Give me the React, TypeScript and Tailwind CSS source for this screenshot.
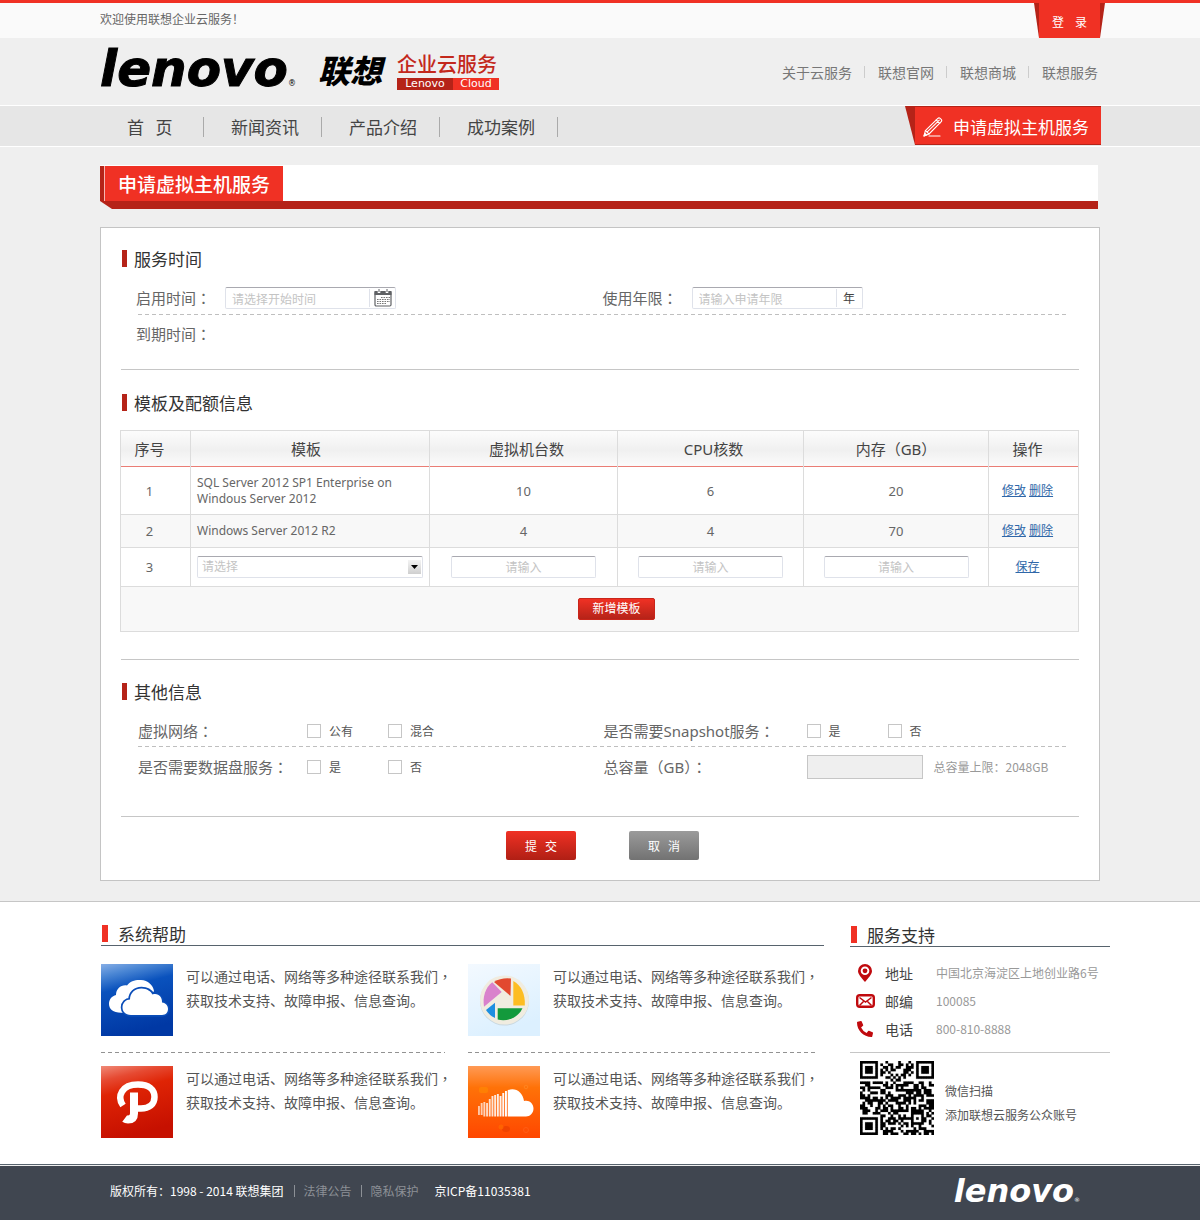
import type { ReactNode } from "react";
import { FaPhoneAlt } from "react-icons/fa";

const QR_SIZE = 29;

function inFinder(x: number, y: number, ox: number, oy: number, size: number): boolean | null {
  const dx = x - ox;
  const dy = y - oy;
  if (dx < -1 || dy < -1 || dx > size || dy > size) return null;
  if (dx < 0 || dy < 0 || dx >= size || dy >= size) return size === 7 ? false : null;
  const ring = Math.min(dx, dy, size - 1 - dx, size - 1 - dy);
  return ring !== 1;
}

function buildQr(): string {
  let seed = 20141;
  let d = "";
  for (let y = 0; y < QR_SIZE; y++) {
    for (let x = 0; x < QR_SIZE; x++) {
      seed = (seed * 1103515245 + 12345) % 2147483648;
      let on = (seed >> 12) % 100 < 52;
      const fixed =
        inFinder(x, y, 0, 0, 7) ??
        inFinder(x, y, QR_SIZE - 7, 0, 7) ??
        inFinder(x, y, 0, QR_SIZE - 7, 7) ??
        inFinder(x, y, 20, 20, 5);
      if (fixed !== null) on = fixed;
      if (on) d += `M${x} ${y}h1v1h-1z`;
    }
  }
  return d;
}

const QR_PATH = buildQr();

function QrCode() {
  return (
    <svg viewBox="0 0 29 29" className="size-[74px] shrink-0" role="img" aria-label="微信二维码">
      <path d={QR_PATH} fill="#000" stroke="#000" strokeWidth="0.06" />
    </svg>
  );
}

function Dashes({ dark = false }: { dark?: boolean }) {
  return (
    <div
      className={
        dark
          ? "h-px bg-[repeating-linear-gradient(90deg,#929292_0_4px,transparent_4px_7px)]"
          : "h-px bg-[repeating-linear-gradient(90deg,#bfbfbf_0_4px,transparent_4px_7px)]"
      }
    />
  );
}

/* Full-width punctuation centred in its em box. */
function Mark({ children }: { children: ReactNode }) {
  return <span className="font-['Noto_Sans_CJK_TC',sans-serif]">{children}</span>;
}

function SectionTitle({ children }: { children: ReactNode }) {
  return (
    <h2 className="ml-[21px] flex h-[17px] items-center gap-[7px] text-[17px] leading-[17px] text-[#333]">
      <span className="h-full w-[5px] bg-[#b52318]" />
      {children}
    </h2>
  );
}

function CalendarIcon() {
  return (
    <svg viewBox="0 0 18 18" className="size-[18px]" fill="none">
      <rect x="1" y="2.5" width="16" height="14.5" rx="1.2" stroke="#5f6164" strokeWidth="1.2" />
      <path d="M.5 2h17v4H.5z" fill="#5f6164" />
      <path d="M5 0v4M13 0v4" stroke="#fff" strokeWidth="2.6" />
      <path d="M5 0v3M13 0v3" stroke="#5f6164" strokeWidth="1" />
      <path d="M7 8.5h9M3 10.5h13M3 12.5h13M3 14.5h9" stroke="#777" strokeWidth="1.2" strokeDasharray="1.6 .9" />
    </svg>
  );
}

function PencilIcon() {
  return (
    <svg viewBox="0 0 20 20" className="size-5" fill="none" stroke="#fff" strokeWidth="1.1" strokeLinejoin="round" strokeLinecap="round">
      <path d="M1 19l1.4-5.4L14.6 1.6c.8-.8 1.8-.9 2.6-.2l1 .9c.7.8.6 1.8-.2 2.6L6 17z" />
      <path d="M2.4 13.6L6 17M4 15.2L16.3 3.2M13.2 3l3.6 3.4" />
      <path d="M1 19l1-2.6 1.7 1.7z" fill="#fff" />
      <path d="M6 19h11" />
    </svg>
  );
}

function CloudDriveIcon() {
  return (
    <svg viewBox="0 0 72 72" className="size-[72px] shrink-0">
      <defs>
        <linearGradient id="driveBg" x1="0" y1="0" x2="0.25" y2="1">
          <stop offset="0" stopColor="#86aee6" />
          <stop offset="0.17" stopColor="#4a86d4" />
          <stop offset="0.38" stopColor="#0a52bd" />
          <stop offset="1" stopColor="#0038a4" />
        </linearGradient>
      </defs>
      <path d="M0 0h72v72H0z" fill="url(#driveBg)" />
      <path d="M20 48.7C12 48.7 8 45 8 40s3-8 7-9c0-6 5-10.5 11-9.5 3-4.5 9-6 14-5.5 7 .5 12 5 13 11L44 40 30 48.7z" fill="#fff" />
      <path
        d="M30 51c-6 0-8.5-4-8.5-7.5 0-4.5 3.5-8 7.500-8 0-6.500 5-11 11.500-11 5.500 0 9.500 3 11 6C57 28.500 61.500 33 61 38.500c4 .5 6 3.500 6 6.500 0 3-2 6-6 6z"
        fill="#fff"
        stroke="#0a4db8"
        strokeWidth="3.5"
        paintOrder="stroke"
      />
    </svg>
  );
}

function PhotoIcon() {
  return (
    <svg viewBox="0 0 72 72" className="size-[72px] shrink-0">
      <defs>
        <linearGradient id="photoBg" x1="0" y1="0" x2="0.4" y2="1">
          <stop offset="0" stopColor="#f3f9ff" />
          <stop offset="1" stopColor="#dcf0ff" />
        </linearGradient>
      </defs>
      <path d="M0 0h72v72H0z" fill="url(#photoBg)" />
      <circle cx="36.5" cy="37" r="24.5" fill="#c9d8e0" />
      <circle cx="36.5" cy="36" r="24.5" fill="#f0ece0" />
      <path d="M26 18q7-4.500 17-3.500L42.500 32z" fill="#e2492f" />
      <path d="M45.3 17C53 21 57.5 30 56.8 41.5H45.3z" fill="#fdbd22" />
      <path d="M29.7 44.3h24.8C50 54 39 58 29.7 55.5z" fill="#139a3c" />
      <path d="M18 46l9-7.3V54q-6-3-9-8z" fill="#1d8fe0" />
      <path d="M16 42.7C14.5 33 17 24 24.3 18.3L33.7 28z" fill="#d982cc" />
    </svg>
  );
}

function PinRingIcon() {
  return (
    <svg viewBox="0 0 72 72" className="size-[72px] shrink-0">
      <defs>
        <linearGradient id="ringBg" x1="0" y1="0" x2="0.25" y2="1">
          <stop offset="0" stopColor="#f08a78" />
          <stop offset="0.2" stopColor="#e64a32" />
          <stop offset="0.4" stopColor="#df2405" />
          <stop offset="1" stopColor="#c61000" />
        </linearGradient>
      </defs>
      <path d="M0 0h72v72H0z" fill="url(#ringBg)" />
      <g fill="none" stroke="#fff">
        <path d="M22 39.5C15.500 30 21 18.500 37 18.500c11 0 16.500 5 16.500 12.500S48 42.500 40 42.500h-4" strokeWidth="6.500" />
        <path d="M33 26.500V47.500q0 6-6 6-2 0-3.300-1" strokeWidth="8" />
      </g>
    </svg>
  );
}

const BARS: [number, number][] = [
  [10, 40], [12.7, 37], [15.4, 36], [18.1, 37], [20.8, 33], [23.5, 30], [26.2, 29], [28.9, 28], [31.6, 30], [34.3, 27], [37, 25],
];

function SoundIcon() {
  return (
    <svg viewBox="0 0 72 72" className="size-[72px] shrink-0">
      <defs>
        <linearGradient id="soundBg" x1="0" y1="0" x2="0" y2="1">
          <stop offset="0" stopColor="#ff9a55" />
          <stop offset="0.3" stopColor="#ff7208" />
          <stop offset="1" stopColor="#ff4700" />
        </linearGradient>
      </defs>
      <path d="M0 0h72v72H0z" fill="url(#soundBg)" />
      <rect x="11" y="21" width="9" height="6" rx="2" fill="#ff8f00" opacity=".5" />
      <circle cx="58" cy="21" r="1.8" fill="none" stroke="#ff8420" />
      <ellipse cx="38" cy="63" rx="4" ry="3" fill="#f04300" />
      <circle cx="33" cy="61" r="2.5" fill="#ff6a00" opacity=".7" />
      <circle cx="58" cy="64" r="2.5" fill="none" stroke="#ff5c14" />
      {BARS.map(([x, y], i) => (
        <rect key={x} x={x} y={y} width="1.9" height={(i < 2 ? 49 : 50.5) - y} fill="#fff" opacity={0.65 + i * 0.035} />
      ))}
      <path d="M39.7 24.3C47 21 55 26 56 35c5-1.5 9.500 2.500 9.500 7.500 0 4.500-3.500 8-7.500 8H39.700z" fill="#fff" />
    </svg>
  );
}

function MarkerIcon() {
  return (
    <svg viewBox="0 0 14 18" className="h-[18px] w-[14px]">
      <path d="M7 0a7 7 0 0 1 7 7c0 3.500-3.500 6.500-7 11C3.500 13.500 0 10.500 0 7a7 7 0 0 1 7-7z" fill="#c00a0e" />
      <circle cx="7" cy="6.8" r="4.3" fill="#fff" />
      <circle cx="7" cy="6.8" r="2.4" fill="#c00a0e" />
    </svg>
  );
}

function MailIcon() {
  return (
    <svg viewBox="0 0 19 14" className="h-[14px] w-[19px]">
      <rect x="1.200" y="1.200" width="16.600" height="11.600" rx="2.500" fill="#fff" stroke="#c00a0e" strokeWidth="2.400" />
      <path d="M3.500 3.500l6 4.500 6-4.500M3.500 11.500l4-4M15.500 11.500l-4-4" fill="none" stroke="#c00a0e" strokeWidth="1.500" />
    </svg>
  );
}

const TOP_LINKS = ["关于云服务", "联想官网", "联想商城", "联想服务"];
const NAV = ["首\u00a0\u00a0\u00a0页", "新闻资讯", "产品介绍", "成功案例"];

function TopHeader() {
  return (
    <header>
      <div className="border-t-[3px] border-[#f03124] bg-[#fafafa]">
        <div className="mx-auto flex h-[35px] max-w-[1000px] justify-between">
          <p className="mt-[9px] text-[12px] leading-[14px] text-[#666]">欢迎使用联想企业云服务！</p>
          <div className="mr-[-5px] w-[71px] bg-[#b52318] px-[5px] [clip-path:polygon(0_0,100%_0,calc(100%-5px)_100%,5px_100%)]">
            <button type="button" className="h-full w-full cursor-pointer whitespace-pre bg-[#f03124] pt-[2px] text-[12px] text-white">
              登{"    "}录
            </button>
          </div>
        </div>
      </div>

      <div className="mx-auto flex h-[67px] max-w-[1000px] items-center justify-between">
        <a href="#" className="flex items-center">
          <span className="mb-1.5 w-[214px] whitespace-nowrap font-['DejaVu_Sans'] text-[50px] font-bold italic leading-[50px] text-black [-webkit-text-stroke:1px_#000]">
            lenovo<span className="text-[8px] font-normal not-italic leading-[8px] [-webkit-text-stroke:0]">®</span>
          </span>
          <span className="mb-1.5 ml-1 text-[32px] font-black italic leading-[34px] text-black">联想</span>
          <span className="ml-[15px] flex w-[102px] flex-col">
            <span className="pb-1 text-[20px] font-medium leading-[20px] text-[#c3281c]">企业云服务</span>
            <span className="flex h-3 text-center font-['DejaVu_Sans'] text-[11px] leading-3 text-white">
              <span className="w-[56px] bg-[#b52318]">Lenovo</span>
              <span className="flex-1 bg-[#f03124]">Cloud</span>
            </span>
          </span>
        </a>
        <nav className="mr-[2px] flex items-center text-[14px] leading-5 text-[#777]">
          {TOP_LINKS.map((t, i) => (
            <span key={t} className="flex items-center">
              {i > 0 && <span className="ml-3 mr-[13px] h-3 w-px bg-[#ccc]" />}
              <a href="#">{t}</a>
            </span>
          ))}
        </nav>
      </div>

      <div className="border-y border-white bg-[#e6e6e6]">
        <div className="mx-auto flex h-10 max-w-[1000px] justify-between">
          <nav className="flex items-center pt-0.5 text-[17px] leading-6 text-[#444]">
            {NAV.map((t, i) => (
              <a
                key={t}
                href="#"
                className={
                  i === 0
                    ? "flex h-5 w-[104px] items-center border-r border-[#aaa] pl-[27px]"
                    : "flex h-5 w-[118px] items-center border-r border-[#aaa] pl-[27px]"
                }
              >
                {t}
              </a>
            ))}
          </nav>
          <div className="mr-[-1px] h-[39px] bg-[#b52318] py-px pl-[10px] [clip-path:polygon(0_0,100%_0,100%_100%,10px_100%)]">
            <a href="#" className="flex h-full w-[186px] items-center gap-[10px] bg-[#f03124] pl-2 pt-0.5 text-[17px] leading-6 text-white">
              <PencilIcon />
              申请虚拟主机服务
            </a>
          </div>
        </div>
      </div>
    </header>
  );
}

function PageTitle() {
  return (
    <div className="mr-[2px] mt-[18px]">
      <div className="flex h-9 bg-white">
        <div className="mt-px w-1 bg-[#b52318]" />
        <h1 className="mt-px flex w-[179px] items-center border-l border-[#f7b5b0] bg-[#f03124] pl-[13px] text-[19px] font-medium leading-6 text-white">
          申请虚拟主机服务
        </h1>
      </div>
      <div className="h-2 bg-[#b52318] [clip-path:polygon(0_0,100%_0,100%_100%,12px_100%)]" />
    </div>
  );
}

const FIELD = "flex h-[22px] w-[171px] items-center rounded-[2px] border border-[#dfe2ea] border-t-[#a9a9b0] bg-white";

function TimeSection() {
  return (
    <section className="pt-[22px]">
      <SectionTitle>服务时间</SectionTitle>
      <div className="ml-[35px] mr-[30px] mt-5 text-[15px] text-[#666]">
        <div className="grid grid-cols-2">
          <div className="flex h-[22px] items-center">
            <label htmlFor="start" className="w-[89px]">启用时间<Mark>：</Mark></label>
            <div className={FIELD}>
              <input id="start" placeholder="请选择开始时间" className="h-5 w-[143px] pl-1.5 text-[12px] outline-none placeholder:text-[#c4c4c4]" />
              <button type="button" aria-label="选择日期" className="flex h-[18px] flex-1 cursor-pointer items-center justify-center border-l border-[#dfe2ea]">
                <CalendarIcon />
              </button>
            </div>
          </div>
          <div className="flex h-[22px] items-center">
            <label htmlFor="years" className="w-[89px]">使用年限<Mark>：</Mark></label>
            <div className={FIELD}>
              <input id="years" placeholder="请输入申请年限" className="h-5 w-[143px] pl-1.5 text-[12px] outline-none placeholder:text-[#c4c4c4]" />
              <span className="flex h-[18px] flex-1 items-center justify-center border-l border-[#dfe2ea] text-[12px] text-[#444]">年</span>
            </div>
          </div>
        </div>
        <div className="ml-[2px] mt-[5px]">
          <Dashes />
        </div>
        <p className="flex h-[38px] items-center">到期时间<Mark>：</Mark></p>
      </div>
    </section>
  );
}

const CELL = "border border-[#dcdcdc]";
const HEADS = ["序号", "模板", "虚拟机台数", "CPU核数", "内存（GB）", "操作"];
const ROWS = [
  { id: 1, name: "SQL Server 2012 SP1 Enterprise on Windous Server 2012", vm: 10, cpu: 6, mem: 20 },
  { id: 2, name: "Windows Server 2012 R2", vm: 4, cpu: 4, mem: 70 },
];

function HeadCell({ text, index }: { text: string; index: number }) {
  const pad = index === 0 || index === 5 ? "pr-[12px]" : index === 1 ? "pr-2" : index < 4 ? "pl-1.5" : "";
  return <th className={`border-x border-t border-[#dcdcdc] font-normal ${pad}`}>{text}</th>;
}

function QuotaTable() {
  return (
    <table className="mx-[19px] mt-[19px] w-[calc(100%-39px)] table-fixed border-collapse text-center font-['Noto_Sans','Noto_Sans_CJK_SC',sans-serif] text-[13px] leading-4 text-[#666]">
      <colgroup>
        <col className="w-[70px]" />
        <col className="w-[239px]" />
        <col className="w-[188px]" />
        <col className="w-[186px]" />
        <col className="w-[185px]" />
        <col />
      </colgroup>
      <thead>
        <tr className="h-9 border-b border-[#ea7d75] bg-[linear-gradient(#fcfcfc,#f0f0f0_55%,#fbfbfb)] text-[15px] text-[#444]">
          {HEADS.map((h, i) => (
            <HeadCell key={h} text={h} index={i} />
          ))}
        </tr>
      </thead>
      <tbody>
        {ROWS.map((r) => (
          <tr key={r.id} className={r.id === 1 ? "h-12" : "h-[33px] bg-[#f8f8f8]"}>
            <td className="border-x border-b border-[#dcdcdc] pr-3">{r.id}</td>
            <td className="border-x border-b border-[#dcdcdc] pl-1.5 pr-4 text-left text-[12px]">{r.name}</td>
            <td className="border-x border-b border-[#dcdcdc]">{r.vm}</td>
            <td className="border-x border-b border-[#dcdcdc]">{r.cpu}</td>
            <td className="border-x border-b border-[#dcdcdc]">{r.mem}</td>
            <td className="border-x border-b border-[#dcdcdc] pr-3 text-[12px] text-[#2f67a8]">
              <a href="#" className="underline">修改</a> <a href="#" className="underline">删除</a>
            </td>
          </tr>
        ))}
        <tr className="h-[39px]">
          <td className={`${CELL} pr-3`}>3</td>
          <td className={`${CELL} px-1.5`}>
            <div className="relative">
              <select
                aria-label="模板"
                className="block h-[22px] w-full appearance-none rounded-[2px] border border-[#dfe2ea] border-t-[#a9a9b0] bg-white pl-1 text-[12px] text-[#c4c4c4] outline-none"
              >
                <option>请选择</option>
              </select>
              <span className="pointer-events-none absolute right-[2px] top-1 flex h-[14px] w-[13px] items-center justify-center bg-[linear-gradient(#f4f4f4,#cfcfcf)]">
                <svg viewBox="0 0 7 4" className="h-1 w-[7px]">
                  <path d="M0 0h7L3.500 4z" fill="#000" />
                </svg>
              </span>
            </div>
          </td>
          {["虚拟机台数", "CPU核数", "内存"].map((n) => (
            <td key={n} className={CELL}>
              <input
                aria-label={n}
                placeholder="请输入"
                className="mx-auto block h-[22px] w-[145px] rounded-[2px] border border-[#dfe2ea] border-t-[#a9a9b0] bg-white text-center text-[12px] outline-none placeholder:text-[#c4c4c4]"
              />
            </td>
          ))}
          <td className={`${CELL} pr-3 text-[12px] text-[#2f67a8]`}>
            <a href="#" className="underline">保存</a>
          </td>
        </tr>
        <tr className="h-[45px] bg-[#f8f8f8]">
          <td colSpan={6} className={`${CELL} pl-[34px]`}>
            <button
              type="button"
              className="mx-auto block h-[22px] w-[77px] cursor-pointer rounded-[2px] border border-[#c9251a] bg-[linear-gradient(#f03124,#b52318)] text-[12px] leading-5 text-white"
            >
              新增模板
            </button>
          </td>
        </tr>
      </tbody>
    </table>
  );
}

function Check({ text }: { text: string }) {
  return (
    <label className="flex w-[81px] cursor-pointer items-center gap-2 text-[12px] text-[#555]">
      <input type="checkbox" className="size-[14px] appearance-none border border-[#c6c6c6] bg-white checked:bg-[#b52318]" />
      {text}
    </label>
  );
}

function OtherSection() {
  return (
    <section className="mt-[23px]">
      <SectionTitle>其他信息</SectionTitle>
      <div className="ml-[37px] mr-[30px] mt-4 text-[15px] leading-5 text-[#666]">
        <div className="grid h-[30px] grid-cols-2 items-center">
          <div className="flex items-center">
            <span className="w-[169px]">虚拟网络<Mark>：</Mark></span>
            <Check text="公有" />
            <Check text="混合" />
          </div>
          <div className="flex items-center">
            <span className="w-[203px] font-['Noto_Sans','Noto_Sans_CJK_SC',sans-serif]">是否需要Snapshot服务<Mark>：</Mark></span>
            <Check text="是" />
            <Check text="否" />
          </div>
        </div>
        <Dashes />
        <div className="grid h-[39px] grid-cols-2 items-center">
          <div className="flex items-center">
            <span className="w-[169px]">是否需要数据盘服务<Mark>：</Mark></span>
            <Check text="是" />
            <Check text="否" />
          </div>
          <div className="flex items-center">
            <label htmlFor="capacity" className="w-[203px] font-['Noto_Sans','Noto_Sans_CJK_SC',sans-serif]">总容量（GB）<Mark>：</Mark></label>
            <input id="capacity" className="h-6 w-[116px] border border-[#c6c6c6] bg-[#efefef] px-2 text-[12px] outline-none" />
            <span className="ml-[11px] text-[12px] text-[#999]">总容量上限：2048GB</span>
          </div>
        </div>
      </div>
    </section>
  );
}

function HelpItem({ icon }: { icon: ReactNode }) {
  return (
    <div className="flex gap-[13px]">
      {icon}
      <p className="whitespace-nowrap text-[14px] leading-6 text-[#555]">
        可以通过电话、网络等多种途径联系我们<Mark>，</Mark>
        <br />
        获取技术支持、故障申报、信息查询。
      </p>
    </div>
  );
}

function BottomTitle({ children }: { children: ReactNode }) {
  return (
    <h2 className="flex items-center gap-[10px] border-b border-[#57636d] pb-[3px] pl-px text-[17px] leading-[17px] text-[#333]">
      <span className="h-[17px] w-[6px] bg-[#f03124]" />
      {children}
    </h2>
  );
}

function BottomSection() {
  const contacts = [
    { icon: <MarkerIcon />, name: "地址", value: "中国北京海淀区上地创业路6号" },
    { icon: <MailIcon />, name: "邮编", value: "100085" },
    { icon: <FaPhoneAlt className="size-4 text-[#c00a0e]" />, name: "电话", value: "800-810-8888" },
  ];
  return (
    <div className="mt-5 border-t border-[#c6c6c6] bg-white">
      <div className="mx-auto flex max-w-[1020px] pb-[26px] pl-[11px] pt-[23px]">
        <section className="mr-[26px] flex-1">
          <BottomTitle>系统帮助</BottomTitle>
          <div className="mt-[18px] grid grid-cols-[344px_1fr] gap-x-[23px]">
            <HelpItem icon={<CloudDriveIcon />} />
            <HelpItem icon={<PhotoIcon />} />
            <div className="mb-[13px] mt-4"><Dashes dark /></div>
            <div className="mb-[13px] mr-[6px] mt-4"><Dashes dark /></div>
            <HelpItem icon={<PinRingIcon />} />
            <HelpItem icon={<SoundIcon />} />
          </div>
        </section>
        <section className="w-[260px] shrink-0 pt-px">
          <BottomTitle>服务支持</BottomTitle>
          <ul className="mt-3 border-b border-[#c6c6c6] pb-[9px]">
            {contacts.map((c) => (
              <li key={c.name} className="flex h-[28px] items-center">
                <span className="flex w-[35px] justify-center pr-[5px]">{c.icon}</span>
                <span className="w-[51px] text-[14px] text-[#444]">{c.name}</span>
                <span className="whitespace-nowrap text-[12px] text-[#999]">{c.value}</span>
              </li>
            ))}
          </ul>
          <div className="ml-[10px] mt-2 flex gap-[11px]">
            <QrCode />
            <p className="pt-[18px] text-[12px] leading-6 text-[#555]">
              微信扫描
              <br />
              添加联想云服务公众账号
            </p>
          </div>
        </section>
      </div>
    </div>
  );
}

function Footer() {
  return (
    <footer className="border-t border-[#57636d] pt-px">
      <div className="bg-[#404650]">
        <div className="mx-auto flex h-[54px] max-w-[980px] items-center justify-between pb-1 text-[12px] leading-4 text-white">
          <p className="flex items-center">
            <span>版权所有：1998 - 2014 联想集团</span>
            <span className="ml-[10px] mr-[9px] h-3 w-px bg-[#8c9096]" />
            <a href="#" className="text-[#8c9096]">法律公告</a>
            <span className="mx-[9px] h-3 w-px bg-[#8c9096]" />
            <a href="#" className="text-[#8c9096]">隐私保护</a>
            <span className="ml-4">京ICP备11035381</span>
          </p>
          <a href="#" className="mr-[10px] font-['DejaVu_Sans'] text-[32px] font-bold italic leading-8">
            lenovo<span className="text-[6px] font-normal not-italic leading-[6px]">®</span>
          </a>
        </div>
      </div>
    </footer>
  );
}

export default function App() {
  return (
    <div className="bg-[#efefef] font-['Noto_Sans_CJK_SC',sans-serif]">
      <TopHeader />
      <main className="mx-auto max-w-[1000px]">
        <PageTitle />
        <form className="mt-[18px] border border-[#c4c4c4] bg-white pb-5" onSubmit={(e) => e.preventDefault()}>
          <TimeSection />
          <hr className="mx-5 mb-6 mt-4 border-[#c6c6c6]" />
          <SectionTitle>模板及配额信息</SectionTitle>
          <QuotaTable />
          <hr className="mx-5 mt-[27px] border-[#c6c6c6]" />
          <OtherSection />
          <hr className="mx-5 mt-[30px] border-[#c6c6c6]" />
          <div className="mt-[14px] flex justify-center gap-[53px] pl-[5px] text-[12px] text-white">
            <button type="submit" className="h-[29px] w-[70px] cursor-pointer whitespace-pre rounded-[2px] bg-[linear-gradient(#f03124,#b01f15)]">
              提{"   "}交
            </button>
            <button type="button" className="h-[29px] w-[70px] cursor-pointer whitespace-pre rounded-[2px] bg-[linear-gradient(#9b9b9b,#727272)]">
              取{"   "}消
            </button>
          </div>
        </form>
      </main>
      <BottomSection />
      <Footer />
    </div>
  );
}
